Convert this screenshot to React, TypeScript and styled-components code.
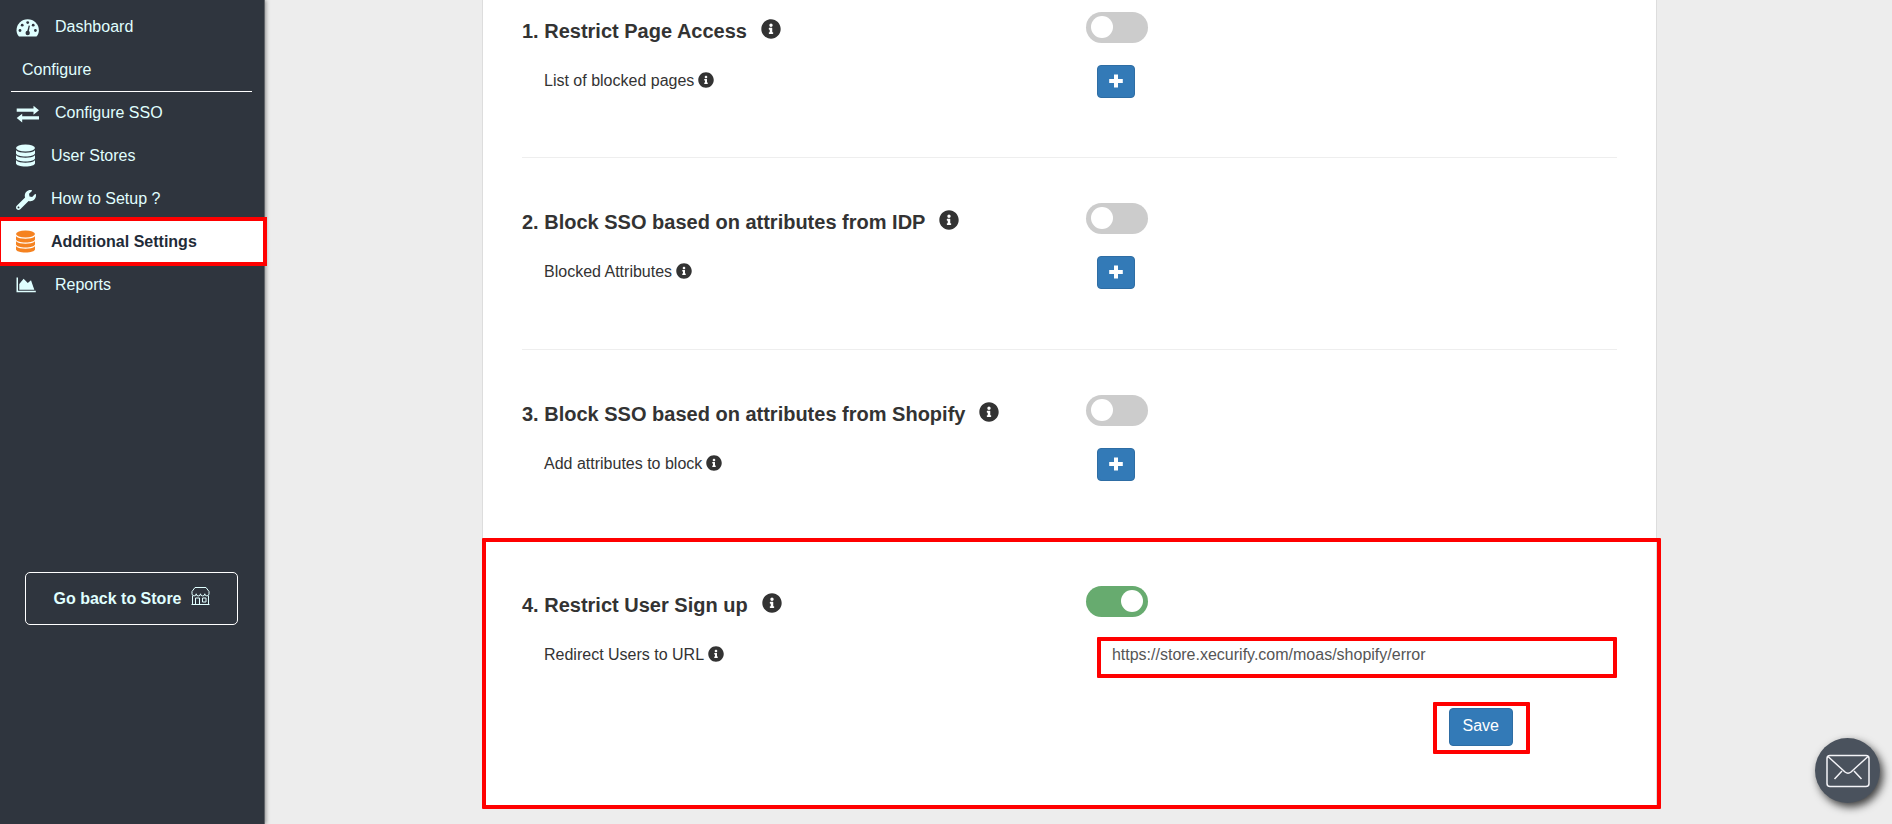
import React from "react";
import styled, { createGlobalStyle, css } from "styled-components";
import { FaInfoCircle, FaWrench } from "react-icons/fa";

const GlobalStyle = createGlobalStyle`
  *, *::before, *::after { box-sizing: border-box; }
  body {
    margin: 0;
    background: #ededed;
    color: #333;
    font: 16px/20px "Liberation Sans", Arial, sans-serif;
  }
`;

const Shell = styled.div`
  display: flex;
  min-height: 100vh;
`;

const Sidebar = styled.aside`
  width: 265px;
  flex: none;
  padding-top: 5px;
  background: #2f353e;
  border-right: 1px solid #606469;
  box-shadow: 1px 0 4px rgba(0, 0, 0, 0.4);
  color: lightcyan;
`;

const NavLink = styled.a<{ $active?: boolean; $wide?: boolean }>`
  display: flex;
  align-items: center;
  height: 43px;
  padding: 0 16px;
  gap: ${(p) => (p.$wide ? 15 : 11)}px;
  color: inherit;
  text-decoration: none;
  ${(p) =>
    p.$active &&
    css`
      background: #fff;
      color: #1f2b38;
      font-weight: bold;
      outline: 4px solid #f00;
      outline-offset: -1px;
      position: relative;
    `}
`;

const IconSlot = styled.span<{ $raised?: boolean }>`
  display: flex;
  width: 24px;
  padding-top: ${(p) => (p.$raised ? 0 : 2)}px;
`;

const GroupTitle = styled.div`
  height: 44px;
  margin: 0 12px 0 11px;
  padding: 12px 11px;
  border-bottom: 1px solid #fff;
`;

const GroupLinks = styled.div`
  margin-top: -1px;
`;

const StoreButton = styled.button`
  display: flex;
  align-items: center;
  justify-content: center;
  gap: 9px;
  width: 213px;
  height: 53px;
  margin: 266px 0 0 25px;
  border: 1px solid #fff;
  border-radius: 5px;
  background: transparent;
  color: lightcyan;
  font: inherit;
  font-weight: bold;
  svg { margin-bottom: 6px; }
`;

const Main = styled.main`
  flex: 1;
  min-width: 0;
  padding: 0 235px 0 217px;
`;

const Card = styled.div`
  background: #fff;
  border: solid #ddd;
  border-width: 0 1px;
`;

const Section = styled.section<{ $first?: boolean; $marked?: boolean }>`
  margin: 0 39px;
  padding: ${(p) => (p.$first ? "12px 0 59px" : "45px 0 60px")};
  border-bottom: 1px solid #eee;
  ${(p) =>
    p.$marked &&
    css`
      margin: -4px -5px 0 -1px;
      padding: 48px 44px 55px 40px;
      border: 0;
      outline: 4px solid #f00;
      outline-offset: -4px;
      border-radius: 1px;
    `}
`;

const Row = styled.div<{ $sub?: boolean }>`
  display: grid;
  grid-template-columns: 515fr 485fr;
  align-items: start;
  ${(p) => p.$sub && css`margin-top: 22px;`}
`;

const Title = styled.h2`
  display: flex;
  align-items: center;
  gap: 14px;
  height: 31px;
  margin: 0;
  padding-top: 7px;
  font-size: 20px;
  line-height: 24px;
  svg { margin-top: -4px; }
`;

const Label = styled.label`
  display: flex;
  align-items: center;
  gap: 4px;
  padding: 6px 0 0 22px;
  svg { margin-top: -3px; }
`;

const Toggle = styled.input`
  appearance: none;
  display: block;
  width: 62px;
  height: 31px;
  margin: 0;
  border-radius: 16px;
  background: #ccc;
  &::before {
    content: "";
    display: block;
    width: 22px;
    height: 22px;
    margin: 4px 5px;
    border-radius: 50%;
    background: #fff;
  }
  &:checked { background: #67ab6f; }
  &:checked::before { margin-left: 35px; }
`;

const Button = styled.button`
  display: inline-flex;
  align-items: center;
  justify-content: center;
  height: 38px;
  padding: 0 13px 2px;
  border: 1px solid #2e6da4;
  border-radius: 4px;
  background: #337ab7;
  color: #fff;
  font: inherit;
`;

const AddButton = styled(Button)`
  width: 38px;
  height: 33px;
  margin-left: 11px;
  padding: 0 0 2px;
`;

const UrlBox = styled.div`
  margin: -2px 0 0 11px;
  outline: 4px solid #f00;
  outline-offset: -4px;
  padding-bottom: 3px;
  border-radius: 1px;
`;

const UrlInput = styled.input`
  display: block;
  width: 100%;
  height: 38px;
  padding: 0 14px 3px;
  border: 1px solid #ccc;
  border-radius: 4px;
  background: #fff;
  color: #555;
  font: inherit;
`;

const SaveRow = styled.div`
  display: flex;
  justify-content: flex-end;
  margin-top: 24px;
  padding-right: 87px;
`;

const SaveBox = styled.div`
  display: flex;
  padding: 6px 17px 8px 16px;
  outline: 4px solid #f00;
  outline-offset: -4px;
  border-radius: 1px;
`;

const MailButton = styled.button`
  position: fixed;
  right: 12px;
  bottom: 21px;
  display: flex;
  align-items: center;
  justify-content: center;
  width: 65px;
  height: 65px;
  padding: 0;
  border: 0;
  border-radius: 50%;
  background: #4a525d;
  box-shadow: 3px 4px 8px rgba(0, 0, 0, 0.75);
`;

const GaugeIcon = () => (
  <svg width="24" height="18" viewBox="0 0 24 18" fill="currentColor" aria-hidden="true">
    <path d="M3 17.500C1.500 16 .5 13.600.5 11.500a11.200 11.200 0 0 1 22.400 0c0 2.100-.9 4.500-2.400 6z" />
    <g fill="#2f353e">
      <circle cx="4" cy="11.500" r="1.400" />
      <circle cx="6.200" cy="6.200" r="1.400" />
      <circle cx="11.700" cy="3.600" r="1.400" />
      <circle cx="17.200" cy="6.200" r="1.400" />
      <circle cx="19.400" cy="11.500" r="1.400" />
      <circle cx="11.700" cy="14" r="2.200" />
      <path d="m11 13 1.700-6.500 1.200.3L12.500 14z" />
    </g>
  </svg>
);

const ExchangeIcon = () => (
  <svg width="24" height="18" viewBox="0 0 24 18" fill="currentColor" aria-hidden="true">
    <path d="M.7 3.500h16.800V.7l5.500 4.500-5.500 4.500V6.700H.7zM23 11.300H6.200V8.700L.7 13l5.500 4.500v-3H23z" />
  </svg>
);

const DatabaseIcon = ({ color = "currentColor" }: { color?: string }) => (
  <svg width="20" height="23" viewBox="1 0 20 23" fill={color} aria-hidden="true">
    <ellipse cx="10.500" cy="4" rx="9.500" ry="3.500" />
    <path d="M1 6.300c2 1.800 5.500 2.500 9.500 2.500S18 8.100 20 6.300v2.900c0 1.900-4.300 3.300-9.500 3.300S1 11.100 1 9.200zM1 11.300c2 1.800 5.500 2.500 9.500 2.500s7.500-.7 9.500-2.500v2.900c0 1.900-4.300 3.300-9.500 3.300S1 16.100 1 14.200zM1 16.300c2 1.800 5.500 2.500 9.500 2.500s7.500-.7 9.500-2.500v2.900c0 1.900-4.300 3.300-9.500 3.300S1 21.100 1 19.200z" />
  </svg>
);

const ChartIcon = () => (
  <svg width="21" height="16" viewBox="0 0 21 16" fill="currentColor" aria-hidden="true">
    <path d="M.5.500H2v13.300h17.800v1.500H.500zM3.300 12.800V7L7.600 1.800l4.200 4.200L15 3.200l3.300 9.600z" />
  </svg>
);

const PlusIcon = () => (
  <svg width="14" height="14" viewBox="0 0 14 14" fill="currentColor" aria-hidden="true">
    <path d="M5 .5h4V5h4.800v4H9v4.500H5V9H.2V5H5z" />
  </svg>
);

const StoreIcon = () => (
  <svg width="19" height="18" viewBox="0 0 19 18" fill="none" stroke="currentColor" aria-hidden="true">
    <path d="M4 .5h11l3 4v2.300a2.100 2.100 0 0 1-4.200 0 2.100 2.100 0 0 1-4.300 0 2.100 2.100 0 0 1-4.300 0A2.100 2.100 0 0 1 1 6.800V4.500zM1.500 9v8M17.500 9v8M.5 17.500h18M4.500 17v-6h4v6M11.500 11h3.500v4h-3.500z" />
  </svg>
);

const MailIcon = () => (
  <svg width="44" height="34" viewBox="0 0 44 34" fill="none" stroke="#f4f4f8" strokeWidth="1.500" aria-hidden="true">
    <rect x="1" y="1.500" width="42" height="31" rx="3" />
    <path d="m2 2.500 17 15.500q3 2.500 6 0L42 2.500M16 17l-7.500 8M28 17l7.500 8" />
  </svg>
);

const blocks = [
  { id: "pages", title: "1. Restrict Page Access", label: "List of blocked pages" },
  { id: "idp", title: "2. Block SSO based on attributes from IDP", label: "Blocked Attributes" },
  { id: "shopify", title: "3. Block SSO based on attributes from Shopify", label: "Add attributes to block" },
];

export default function App() {
  return (
    <>
      <GlobalStyle />
      <Shell>
        <Sidebar>
          <nav>
            <NavLink href="#dashboard" $wide><IconSlot><GaugeIcon /></IconSlot>Dashboard</NavLink>
            <GroupTitle>Configure</GroupTitle>
            <GroupLinks>
              <NavLink href="#sso" $wide><IconSlot><ExchangeIcon /></IconSlot>Configure SSO</NavLink>
              <NavLink href="#stores"><IconSlot $raised><DatabaseIcon /></IconSlot>User Stores</NavLink>
              <NavLink href="#setup"><IconSlot><FaWrench size={20} /></IconSlot>How to Setup ?</NavLink>
              <NavLink href="#settings" $active><IconSlot $raised><DatabaseIcon color="#f58220" /></IconSlot>Additional Settings</NavLink>
              <NavLink href="#reports" $wide><IconSlot $raised><ChartIcon /></IconSlot>Reports</NavLink>
            </GroupLinks>
          </nav>
          <StoreButton type="button">Go back to Store<StoreIcon /></StoreButton>
        </Sidebar>
        <Main>
          <Card>
            {blocks.map((b, i) => (
              <Section key={b.id} $first={i === 0}>
                <Row>
                  <Title>{b.title}<FaInfoCircle size={20} /></Title>
                  <Toggle type="checkbox" aria-label={b.title} />
                </Row>
                <Row $sub>
                  <Label htmlFor={b.id}>{b.label}<FaInfoCircle size={16} /></Label>
                  <div>
                    <AddButton id={b.id} type="button" aria-label="Add"><PlusIcon /></AddButton>
                  </div>
                </Row>
              </Section>
            ))}
            <Section $marked>
              <Row>
                <Title>4. Restrict User Sign up<FaInfoCircle size={20} /></Title>
                <Toggle type="checkbox" defaultChecked aria-label="Restrict User Sign up" />
              </Row>
              <Row $sub>
                <Label htmlFor="redirect">Redirect Users to URL<FaInfoCircle size={16} /></Label>
                <UrlBox>
                  <UrlInput id="redirect" defaultValue="https://store.xecurify.com/moas/shopify/error" />
                </UrlBox>
              </Row>
              <SaveRow>
                <SaveBox><Button type="button">Save</Button></SaveBox>
              </SaveRow>
            </Section>
          </Card>
        </Main>
      </Shell>
      <MailButton type="button" aria-label="Contact us"><MailIcon /></MailButton>
    </>
  );
}
